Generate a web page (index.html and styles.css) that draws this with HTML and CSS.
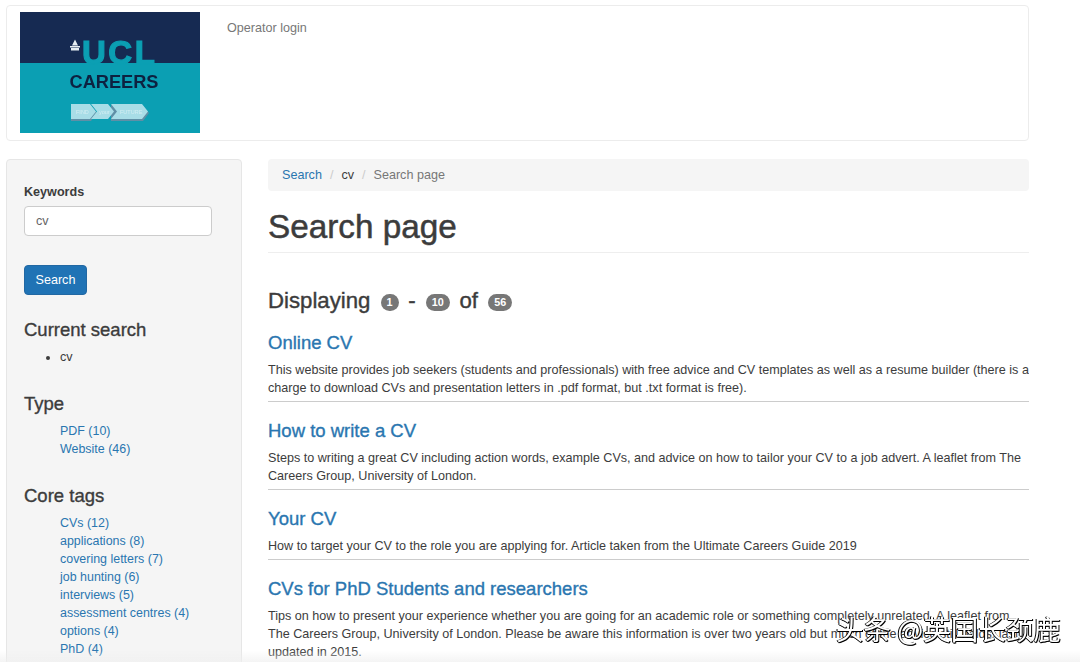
FILE: index.html
```html
<!DOCTYPE html>
<html lang="en">
<head>
    <meta charset="UTF-8">
    <title>Search page</title>
    <link rel="stylesheet" href="styles.css">
</head>
<body>
    <div class="header">
        <svg class="logo" width="180" height="121" viewBox="0 0 180 121">
            <rect width="180" height="121" fill="#0b9fb3"/>
            <rect width="180" height="51" fill="#162a52"/>
            <path d="M50 34h10v1.500H50zM51 36h8v2.500h-8zM52 33.500l3-6 3 6z" fill="#e6edf2"/>
            <text x="62" y="52" class="logo-ucl">UCL</text>
            <text x="94" y="76" text-anchor="middle" class="logo-careers">CAREERS</text>
            <path d="M51 93h19l7 8-6 8H51z" fill="#5f8fa6"/>
            <path d="M91 93h31l7 8-6 8H91z" fill="#5f8fa6"/>
            <path d="M51 92h19l6 7.500-6 7.500H51z" fill="#a8dde7"/>
            <path d="M71 92h17l6 7.500-6 7.500H71l6-7.500z" fill="#a8dde7"/>
            <path d="M91 92h31l6 7.500-6 7.500H91l6-7.500z" fill="#a8dde7"/>
            <text x="56" y="102" class="logo-small">FIND</text>
            <text x="79" y="102" class="logo-small">your</text>
            <text x="100" y="102" class="logo-small">FUTURE</text>
        </svg>
        <a class="operator" href="#">Operator login</a>
    </div>

    <div class="columns">
        <div class="sidebar">
            <label class="kw-label">Keywords</label>
            <input class="kw-input" type="text" value="cv">
            <button class="btn">Search</button>

            <h3>Current search</h3>
            <ul class="current">
                <li>cv</li>
            </ul>

            <h3>Type</h3>
            <ul class="facets">
                <li><a href="#">PDF (10)</a></li>
                <li><a href="#">Website (46)</a></li>
            </ul>

            <h3>Core tags</h3>
            <ul class="facets">
                <li><a href="#">CVs (12)</a></li>
                <li><a href="#">applications (8)</a></li>
                <li><a href="#">covering letters (7)</a></li>
                <li><a href="#">job hunting (6)</a></li>
                <li><a href="#">interviews (5)</a></li>
                <li><a href="#">assessment centres (4)</a></li>
                <li><a href="#">options (4)</a></li>
                <li><a href="#">PhD (4)</a></li>
                <li><a href="#">video interviews (4)</a></li>
            </ul>
        </div>

        <div class="main">
            <div class="breadcrumb">
                <a href="#">Search</a><span class="sep">/</span><span class="crumb-cv">cv</span><span class="sep">/</span><span class="crumb-last">Search page</span>
            </div>
            <h1>Search page</h1>
            <h2 class="displaying">Displaying <span class="badge">1</span> - <span class="badge">10</span> of <span class="badge">56</span></h2>

            <div class="result">
                <h3><a href="#">Online CV</a></h3>
                <p>This website provides job seekers (students and professionals) with free advice and CV templates as well as a resume builder (there is a charge to download CVs and presentation letters in .pdf format, but .txt format is free).</p>
            </div>
            <div class="result">
                <h3><a href="#">How to write a CV</a></h3>
                <p>Steps to writing a great CV including action words, example CVs, and advice on how to tailor your CV to a job advert. A leaflet from The Careers Group, University of London.</p>
            </div>
            <div class="result">
                <h3><a href="#">Your CV</a></h3>
                <p>How to target your CV to the role you are applying for. Article taken from the Ultimate Careers Guide 2019</p>
            </div>
            <div class="result">
                <h3><a href="#">CVs for PhD Students and researchers</a></h3>
                <p>Tips on how to present your experience whether you are going for an academic role or something completely unrelated. A leaflet from The Careers Group, University of London. Please be aware this information is over two years old but much of the advice still holds, last updated in 2015.</p>
            </div>
        </div>
    </div>

    <div class="fade"></div>
    <div class="watermark">头条 @英国长颈鹿</div>
</body>
</html>
```

FILE: styles.css
```css
html, body {
    height: 662px;
    overflow: hidden;
}

body {
    margin: 0;
    padding: 5px 0 0 6px;
    box-sizing: border-box;
    width: 1029px;
    font-family: "Liberation Sans", Arial, sans-serif;
    font-size: 12.6px;
    line-height: 18px;
    color: #3c3c3c;
    background-color: #fff;
}

a {
    color: #2a76b0;
    text-decoration: none;
}

.header {
    display: flex;
    align-items: flex-start;
    padding: 6px 13px;
    height: 122px;
    border: 1px solid #ececec;
    border-radius: 4px;
}

.logo {
    flex: none;
    filter: blur(0.4px);
}

.logo-ucl {
    font-family: "Liberation Sans", Arial, sans-serif;
    font-size: 33px;
    font-weight: bold;
    letter-spacing: 2.500px;
    fill: #0b9fb3;
    stroke: #0b9fb3;
    stroke-width: 1.2px;
}

.logo-careers {
    font-family: "Liberation Sans", Arial, sans-serif;
    font-size: 18.2px;
    font-weight: bold;
    fill: #0d2140;
}

.logo-small {
    font-family: "Liberation Sans", Arial, sans-serif;
    font-size: 5.500px;
    fill: #d3eef3;
}

.operator {
    margin: 7px 0 0 27px;
    color: #777;
}

.columns {
    display: flex;
    align-items: flex-start;
    gap: 26px;
    margin-top: 18px;
}

.sidebar {
    flex: none;
    width: 236px;
    height: 560px;
    box-sizing: border-box;
    padding: 23px 17px;
    background-color: #f5f5f5;
    border: 1px solid #e6e6e6;
    border-radius: 4px;
}

.kw-label {
    display: block;
    margin-bottom: 5px;
    font-weight: bold;
}

.kw-input {
    display: block;
    width: 188px;
    height: 30px;
    box-sizing: border-box;
    padding: 0 11px;
    font: inherit;
    color: #666;
    background-color: #fff;
    border: 1px solid #ccc;
    border-radius: 4px;
}

.btn {
    display: block;
    margin-top: 29px;
    padding: 0 10.5px;
    height: 30px;
    font: inherit;
    color: #fff;
    background-color: #2073b5;
    border: 1px solid #2268a3;
    border-radius: 4px;
}

.sidebar h3 {
    margin: 25px 0 8px;
    font-size: 18.5px;
    line-height: 20px;
    font-weight: 500;
    -webkit-text-stroke: 0.35px;
}

.sidebar h3 + ul + h3 {
    margin-top: 28px;
}

.current,
.facets {
    margin: 0;
    padding: 0 0 0 36px;
}

.facets {
    font-size: 12.45px;
    list-style: none;
}

.main {
    flex: 1;
    min-width: 0;
}

.breadcrumb {
    height: 32px;
    line-height: 32px;
    padding: 0 14px;
    box-sizing: border-box;
    background-color: #f5f5f5;
    border-radius: 4px;
}

.sep {
    padding: 0 8px;
    color: #ccc;
}

.crumb-last {
    color: #777;
}

h1 {
    margin: 18px 0 0;
    padding-bottom: 7px;
    font-size: 33.3px;
    line-height: 36px;
    font-weight: 500;
    -webkit-text-stroke: 0.5px;
    border-bottom: 1px solid #eee;
}

.displaying {
    margin: 36px 0 20px;
    font-size: 22.2px;
    line-height: 24px;
    font-weight: 500;
    word-spacing: 0.5px;
    -webkit-text-stroke: 0.4px;
}

.badge {
    display: inline-block;
    min-width: 6px;
    margin: 0 3px 0 3.500px;
    padding: 3px 6px;
    font-size: 10.8px;
    line-height: 11px;
    font-weight: bold;
    color: #fff;
    vertical-align: middle;
    -webkit-text-stroke: 0;
    background-color: #777;
    border-radius: 9px;
}

.result {
    padding-bottom: 4px;
    margin-bottom: 19px;
    border-bottom: 1px solid #ccc;
}

.result:last-child {
    border-bottom: none;
}

.result h3 {
    margin: 0 0 8px;
    font-size: 18.5px;
    line-height: 20px;
    font-weight: 500;
    -webkit-text-stroke: 0.35px;
}

.result p {
    margin: 0;
}

.fade {
    position: fixed;
    left: 0;
    bottom: 0;
    width: 1080px;
    height: 20px;
    background: linear-gradient(rgba(255, 255, 255, 0) 40%, rgba(240, 240, 240, 0.7));
}

.watermark {
    position: fixed;
    left: 836px;
    top: 613px;
    font-family: "Noto Sans CJK SC", sans-serif;
    font-size: 27.5px;
    line-height: 30px;
    white-space: nowrap;
    color: #fff;
    text-shadow: 1px 1px 0 #000, -1px 0 0 #000, 0 1px 0 #000;
}
```
